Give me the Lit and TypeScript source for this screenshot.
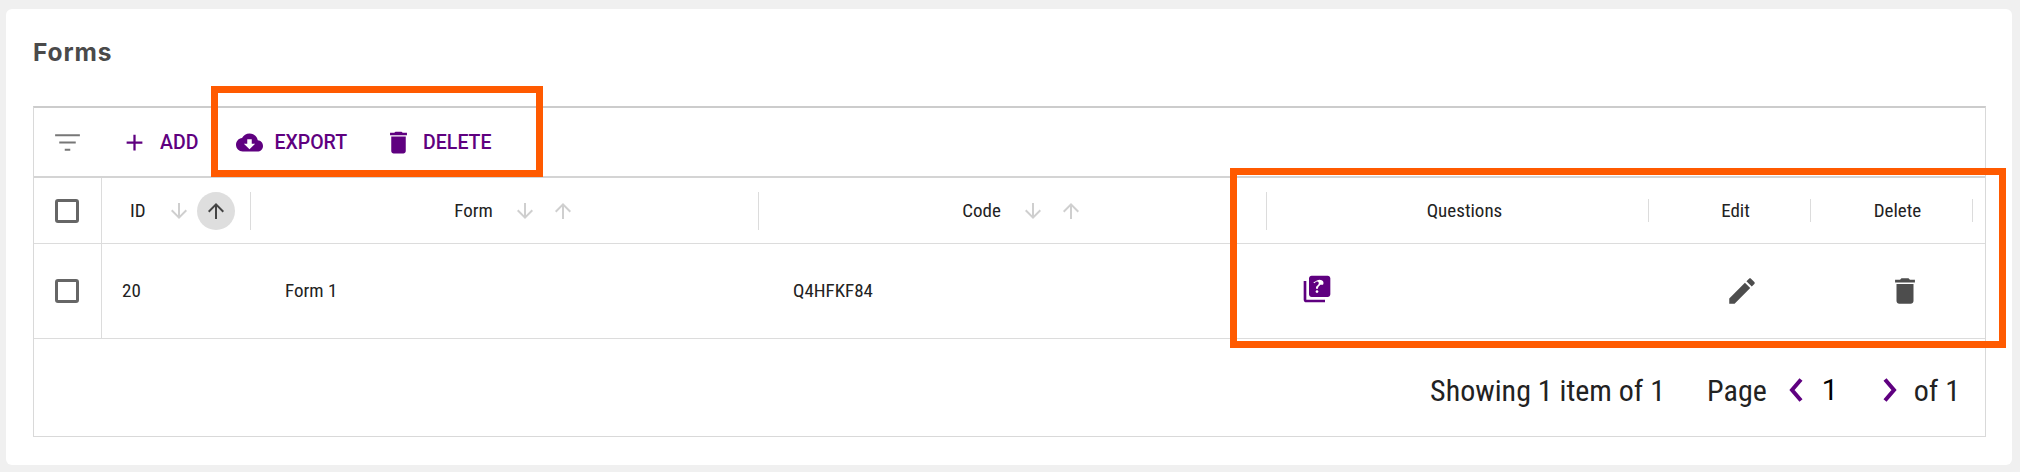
import { LitElement, html, css, svg } from "lit";
import { customElement } from "lit/decorators.js";

const icon = (d: unknown, size: number, cls = "") =>
  html`<svg class=${cls} width=${size} height=${size} viewBox="0 0 24 24" fill="currentColor">${d}</svg>`;

const ICONS = {
  filter: svg`<path d="M10 18h4v-1.4h-4V18zM3 6v1.4h18V6H3zm3 6.7h12v-1.4H6v1.4z"/>`,
  add: svg`<path d="M19 13h-6v6h-2v-6H5v-2h6V5h2v6h6v2z"/>`,
  cloud: svg`<path d="M19.35 10.04C18.67 6.59 15.64 4 12 4 9.11 4 6.6 5.64 5.35 8.04 2.34 8.36 0 10.91 0 14c0 3.31 2.69 6 6 6h13c2.76 0 5-2.24 5-5 0-2.64-2.05-4.78-4.65-4.96zM17 13l-5 5-5-5h3V9h4v4h3z"/>`,
  trash: svg`<path d="M6 19c0 1.1.9 2 2 2h8c1.1 0 2-.9 2-2V7H6v12zM19 4h-3.5l-1-1h-5l-1 1H5v2h14V4z"/>`,
  edit: svg`<path d="M3 17.25V21h3.75L17.81 9.94l-3.75-3.75L3 17.25zM20.71 7.04c.39-.39.39-1.02 0-1.41l-2.34-2.34c-.39-.39-1.02-.39-1.41 0l-1.83 1.83 3.75 3.75 1.83-1.83z"/>`,
  quiz: svg`<path d="M4 6H2v14c0 1.1.9 2 2 2h14v-2H4V6zm16-4H8c-1.1 0-2 .9-2 2v12c0 1.1.9 2 2 2h12c1.1 0 2-.9 2-2V4c0-1.1-.9-2-2-2zm-7.99 13c-.59 0-1.05-.47-1.05-1.05 0-.59.47-1.04 1.05-1.04.59 0 1.04.45 1.04 1.04-.01.58-.45 1.05-1.04 1.05zm2.5-6.17c-.63.93-1.23 1.21-1.56 1.81-.13.24-.18.4-.18 1.18h-1.52c0-.41-.06-1.08.26-1.65.41-.73 1.18-1.16 1.63-1.8.48-.68.21-1.94-1.14-1.94-.88 0-1.32.67-1.5 1.23l-1.37-.57C11.51 5.96 12.52 5 13.99 5c1.23 0 2.08.56 2.51 1.26.37.61.58 1.73.01 2.57z"/>`,
  up: svg`<path d="M4 12l1.41 1.41L11 7.83V20h2V7.83l5.58 5.59L20 12l-8-8-8 8z"/>`,
  down: svg`<path d="M20 12l-1.41-1.41L13 16.17V4h-2v12.17l-5.58-5.59L4 12l8 8 8-8z"/>`,
};

const chevron = (points: string) =>
  html`<svg class="chev" width="14" height="24" viewBox="0 0 14 24" fill="none" stroke="currentColor" stroke-width="4"><polyline points=${points}></polyline></svg>`;

@customElement("app-root")
export class AppRoot extends LitElement {
  static styles = css`
    :host {
      display: block;
      height: 472px;
      box-sizing: border-box;
      padding: 9px 8px 7px 6px;
      background: #f0f0f0;
      font-family: "Roboto", sans-serif;
      font-stretch: 75%;
      color: #222;
    }
    .card {
      position: relative;
      box-sizing: border-box;
      height: 100%;
      padding: 29px 26px 28px 27px;
      background: #fff;
      border-radius: 6px;
    }
    h1 {
      margin: 0 0 28px;
      height: 40px;
      font: 700 24.5px/28px "Inter", sans-serif;
      font-stretch: normal;
      letter-spacing: 0.9px;
      color: #4a4a4a;
    }
    .table {
      height: 331px;
      box-sizing: border-box;
      display: flex;
      flex-direction: column;
      border: 1px solid #d9d9d9;
      border-top: 2px solid #cccccc;
    }
    .toolbar {
      height: 68px;
      flex: none;
      display: flex;
      align-items: center;
      padding-left: 17px;
      border-bottom: 2px solid #d4d4d4;
      color: #5f0080;
    }
    .filter { color: #777; margin-right: 37px; }
    .tool {
      display: flex;
      align-items: center;
      font-size: 19.5px;
      font-weight: 500;
      font-stretch: 100%;
    }
    .tool.add { margin-right: 38px; }
    .tool.add span { margin-left: 12px; }
    .tool.export { margin-right: 37px; }
    .tool.export span { margin-left: 11px; }
    .tool.del span { margin-left: 10px; }
    .row {
      display: grid;
      grid-template-columns: 68px 149px 508px 508px 382px 162px 162px 1fr;
      border-bottom: 1px solid #dcdcdc;
      box-sizing: border-box;
    }
    .head { height: 66px; }
    .body { height: 95px; }
    .cell {
      display: flex;
      align-items: center;
      min-width: 0;
      font-size: 19px;
    }
    .check {
      justify-content: center;
      border-right: 1px solid #dcdcdc;
      padding-right: 1px;
    }
    .box {
      width: 24px;
      height: 24px;
      box-sizing: border-box;
      border: 3px solid #666;
      border-radius: 3px;
    }
    .label {
      flex: 1;
      display: flex;
      align-items: center;
      justify-content: center;
    }
    .label.sort { padding-left: 20px; }
    .label.sort .off:first-of-type { margin-left: 20px; }
    .label.sort .off + .off { margin-left: 14px; }
    .label.id { justify-content: flex-start; padding-left: 28px; }
    .label.id .off { margin: 0 6px 0 21px; }
    .label.q { padding-left: 14px; }
    .label.e { padding-left: 12px; }
    .sep { flex: none; width: 1px; height: 38px; background: #dcdcdc; }
    .sep.short { height: 23px; }
    .off { color: #cfcfcf; }
    .circle {
      width: 38px;
      height: 38px;
      border-radius: 50%;
      background: #dedede;
      color: #444;
      display: flex;
      align-items: center;
      justify-content: center;
    }
    .body .text { padding-bottom: 2px; }
    .body .c-id { padding-left: 20px; }
    .body .c-form { padding-left: 34px; }
    .body .c-code { padding-left: 34px; }
    .body .c-q { padding: 0 0 5px 34px; color: #5f0080; }
    .body .c-e { padding-left: 76px; color: #4d4d4d; }
    .body .c-d { padding-left: 77px; color: #4d4d4d; }
    .footer {
      flex: 1;
      display: flex;
      align-items: center;
      justify-content: flex-end;
      padding: 5px 25px 0 0;
      font-size: 30px;
    }
    .pages { margin-left: 42px; }
    .chev { color: #5f0080; margin-left: 22px; }
    .page-no {
      width: 80px;
      box-sizing: border-box;
      padding-left: 19px;
      font-size: 29px;
      font-stretch: 100%;
      color: #000;
    }
    .page-no + .chev { margin-left: 0; }
    .of { margin-left: 17px; }
    .mark {
      position: absolute;
      box-sizing: border-box;
      border: 7px solid #ff5a00;
    }
    .mark.a { left: 205px; top: 77px; width: 332px; height: 91px; }
    .mark.b { left: 1224px; top: 159px; width: 776px; height: 180px; }
  `;

  render() {
    return html`
      <div class="card">
        <h1>Forms</h1>
        <div class="table">
          <div class="toolbar">
            ${icon(ICONS.filter, 33, "filter")}
            <div class="tool add">${icon(ICONS.add, 27)}<span>ADD</span></div>
            <div class="tool export">${icon(ICONS.cloud, 27)}<span>EXPORT</span></div>
            <div class="tool del">${icon(ICONS.trash, 29)}<span>DELETE</span></div>
          </div>
          <div class="row head">
            <div class="cell check"><div class="box"></div></div>
            <div class="cell">
              <div class="label id"><span>ID</span>${icon(ICONS.down, 24, "off")}<span class="circle">${icon(ICONS.up, 24)}</span></div>
              <div class="sep"></div>
            </div>
            <div class="cell">
              <div class="label sort"><span>Form</span>${icon(ICONS.down, 24, "off")}${icon(ICONS.up, 24, "off")}</div>
              <div class="sep"></div>
            </div>
            <div class="cell">
              <div class="label sort"><span>Code</span>${icon(ICONS.down, 24, "off")}${icon(ICONS.up, 24, "off")}</div>
              <div class="sep"></div>
            </div>
            <div class="cell"><div class="label q">Questions</div><div class="sep short"></div></div>
            <div class="cell"><div class="label e">Edit</div><div class="sep short"></div></div>
            <div class="cell"><div class="label e">Delete</div><div class="sep short"></div></div>
            <div class="cell"></div>
          </div>
          <div class="row body">
            <div class="cell check"><div class="box"></div></div>
            <div class="cell text c-id">20</div>
            <div class="cell text c-form">Form 1</div>
            <div class="cell text c-code">Q4HFKF84</div>
            <div class="cell c-q">${icon(ICONS.quiz, 32)}</div>
            <div class="cell c-e">${icon(ICONS.edit, 34)}</div>
            <div class="cell c-d">${icon(ICONS.trash, 34)}</div>
            <div class="cell"></div>
          </div>
          <div class="footer">
            <span>Showing 1 item of 1</span>
            <span class="pages">Page</span>
            ${chevron("12,1.5 3,12 12,22.5")}
            <span class="page-no">1</span>
            ${chevron("2,1.5 11,12 2,22.5")}
            <span class="of">of 1</span>
          </div>
        </div>
        <div class="mark a"></div>
        <div class="mark b"></div>
      </div>
    `;
  }
}
